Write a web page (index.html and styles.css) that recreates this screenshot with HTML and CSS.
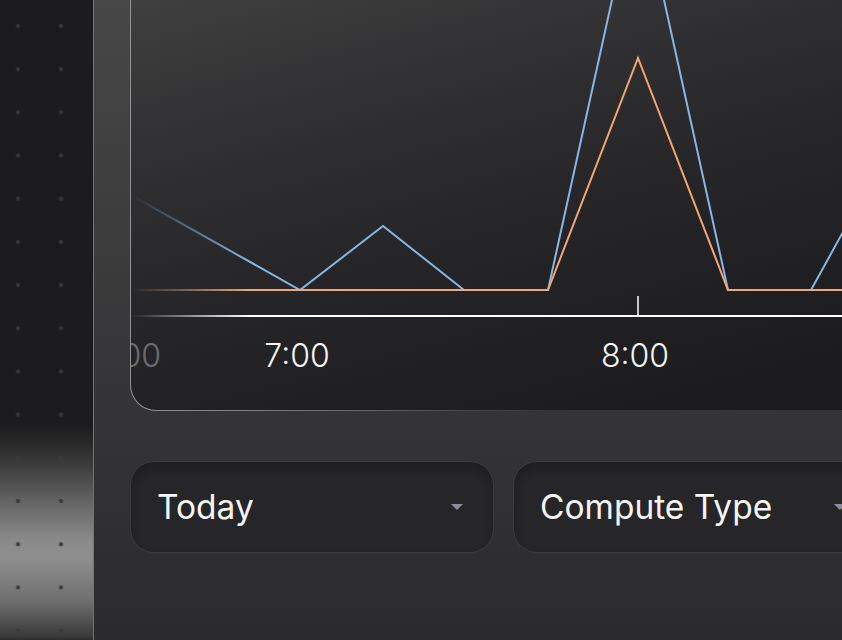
FILE: index.html
```html
<!DOCTYPE html>
<html>
<head>
    <meta charset="UTF-8">
    <title>Usage</title>
    <link rel="stylesheet" href="styles.css">
</head>
<body>
    <div class="app">
        <!-- left rail -->
        <aside class="rail"></aside>

        <main class="panel">
            <div class="chart-card">
                <svg class="chart" width="711" height="420" viewBox="131 -39 711 420">
                    <defs>
                        <linearGradient id="fadeIn" gradientUnits="userSpaceOnUse" x1="131" y1="0" x2="250" y2="0">
                            <stop offset="0" stop-color="#fff" stop-opacity="0"/>
                            <stop offset="1" stop-color="#fff" stop-opacity="1"/>
                        </linearGradient>
                        <mask id="leftFade" maskUnits="userSpaceOnUse" x="131" y="-200" width="800" height="700">
                            <rect x="131" y="-200" width="800" height="700" fill="url(#fadeIn)"/>
                        </mask>
                    </defs>
                    <g mask="url(#leftFade)">
                        <polyline class="line-blue" points="131,195 300,290 383,226 464,290 548,290 638,-118 728,290 811,290 870,183"/>
                        <polyline class="line-orange" points="131,290 548,290 638,58 728,290 870,290"/>
                        <line class="axis" x1="131" y1="316" x2="870" y2="316"/>
                    </g>
                    <line class="tick" x1="638" y1="296" x2="638" y2="316"/>
                    <text class="axis-label faded" x="161" y="367" text-anchor="end">6:00</text>
                    <text class="axis-label" x="297" y="367" text-anchor="middle">7:00</text>
                    <text class="axis-label" x="635" y="367" text-anchor="middle">8:00</text>
                </svg>
            </div>

            <div class="filters">
                <div class="select">
                    <span>Today</span>
                    <i class="caret"></i>
                </div>
                <div class="select">
                    <span>Compute Type</span>
                    <i class="caret"></i>
                </div>
            </div>
        </main>
    </div>
</body>
</html>
```

FILE: styles.css
```css
body {
    margin: 0;
    background-color: #1c1c1e;
    font-family: Inter, "Noto Sans", sans-serif;
    overflow: hidden;
}

.app {
    display: flex;
    width: 842px;
    height: 640px;
}

.rail {
    flex: 0 0 93px;
    background-color: #1c1c1e;
    background-image:
        radial-gradient(circle, #39393c 0, #39393c 1.7px, transparent 2.3px),
        linear-gradient(to bottom, #1c1c1e 0, #1c1c1e 425px, #262627 440px, #3c3c3d 465px, #626262 500px, #8a8a8a 540px, #8e8e8e 558px, #707070 600px, #3c3c3d 635px, #2e2e30 640px);
    background-size: 43px 43.2px, 100% 100%;
    background-position: -3.5px 4.4px, 0 0;
}

.panel {
    flex: 1;
    min-width: 0;
    border-left: 1px solid #737374;
    background: linear-gradient(to bottom, #474747 0%, #3d3d3e 35%, #343436 65%, #2b2b2e 100%);
    padding-left: 36px;
    overflow: hidden;
}

.chart-card {
    width: 760px;
    height: 449px;
    margin-top: -40px;
    border: 1px solid transparent;
    border-radius: 26px;
    background:
        linear-gradient(165deg, #434343 0%, #313133 30%, #262628 55%, #1f1f22 78%, #1a1a1d 100%) padding-box,
        linear-gradient(to right, #939393 0%, #707070 25%, rgba(90, 90, 90, 0) 55%) border-box;
    overflow: hidden;
}

.chart {
    display: block;
}

.line-blue {
    fill: none;
    stroke: #86b6e6;
    stroke-width: 2;
}

.line-orange {
    fill: none;
    stroke: #f3a574;
    stroke-width: 2;
}

.axis {
    stroke: #ffffff;
    stroke-width: 2;
}

.tick {
    stroke: #ffffff;
    stroke-width: 1.5;
}

.axis-label {
    font-family: Inter, sans-serif;
    font-size: 32px;
    font-weight: 300;
    fill: #f4f4f4;
}

.axis-label.faded {
    fill: #6c6c6e;
}

.filters {
    display: flex;
    gap: 19px;
    margin-top: 50px;
}

.select {
    flex: 0 0 auto;
    width: 364px;
    height: 92px;
    box-sizing: border-box;
    display: flex;
    align-items: center;
    justify-content: space-between;
    padding: 0 30px 0 26px;
    background-color: #262629;
    border: 1px solid #3c3c40;
    border-radius: 24px;
    box-shadow: inset 0 6px 10px rgba(0, 0, 0, 0.22);
    color: #f5f5f5;
    font-size: 33.5px;
    font-weight: 400;
}

.caret {
    width: 0;
    height: 0;
    border-left: 6px solid transparent;
    border-right: 6px solid transparent;
    border-top: 6px solid #8b8d9c;
}
```
